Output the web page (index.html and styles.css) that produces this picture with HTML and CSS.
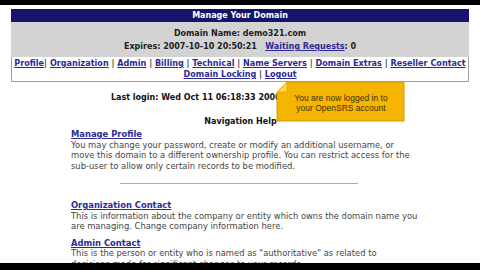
FILE: index.html
```html
<!DOCTYPE html>
<html lang="en">
<head>
    <meta charset="UTF-8">
    <title>Manage Your Domain</title>
    <link rel="stylesheet" href="styles.css">
</head>
<body>
    <div class="screen">
        <div class="bar"></div>
        <div class="page">
            <div class="domain">
                <div class="domain-title">Manage Your Domain</div>
                <div class="domain-info">
                    <p>Domain Name: demo321.com</p>
                    <p>Expires: 2007-10-10 20:50:21 &nbsp; <a href="#">Waiting Requests</a>: 0</p>
                </div>
                <div class="domain-nav">
                    <a href="#">Profile</a>| <a href="#">Organization</a> | <a href="#">Admin</a> | <a href="#">Billing</a> | <a href="#">Technical</a> | <a href="#">Name Servers</a> | <a href="#">Domain Extras</a> | <a href="#">Reseller Contact</a><br>
                    <a href="#">Domain Locking</a> | <a href="#">Logout</a>
                </div>
            </div>

            <div class="content">
                <p class="last-login">Last login: Wed Oct 11 06:18:33 2006</p>
                <h3>Navigation Help</h3>

                <div class="help">
                    <a href="#">Manage Profile</a>
                    <p>You may change your password, create or modify an additional username, or move this domain to a different ownership profile. You can restrict access for the sub-user to allow only certain records to be modified.</p>
                </div>

                <hr>

                <div class="help">
                    <a href="#">Organization Contact</a>
                    <p>This is information about the company or entity which owns the domain name you are managing. Change company information here.</p>
                </div>

                <div class="help">
                    <a href="#">Admin Contact</a>
                    <p>This is the person or entity who is named as "authoritative" as related to decisions made for significant changes to your records.</p>
                </div>
            </div>

            <div class="callout">
                <svg class="callout-bg" width="130" height="41" viewBox="0 0 130 41">
                    <polygon points="11,0 128,0 128,39 1,39 1,10" fill="#f4b400" stroke="#d99a00" stroke-width="1"/>
                    <polygon points="1,10 11,0 11,10" fill="#fbd65a"/>
                    <polygon points="1,10 11,10 11,0" fill="none" stroke="#e0a800" stroke-width="0.6"/>
                </svg>
                <p>You are now logged in to<br>your OpenSRS account</p>
            </div>
        </div>
        <div class="bar bar-bottom"></div>
    </div>
</body>
</html>
```

FILE: styles.css
```css
* {
    padding: 0;
    margin: 0;
}

body {
    background-color: #000;
    font-family: "DejaVu Sans", Verdana, sans-serif;
}

.screen {
    width: 480px;
    height: 270px;
    overflow: hidden;
    display: flex;
    flex-direction: column;
}

.bar {
    height: 5px;
    background-color: #000;
    flex-shrink: 0;
}

.bar-bottom {
    height: 7px;
}

.page {
    flex: 1;
    background-color: #fff;
    position: relative;
    overflow: hidden;
    padding: 4px 11px 0 11px;
}

.domain {
    width: 458px;
}

.domain-title {
    background-color: #14146b;
    color: #fff;
    font-size: 8px;
    font-weight: bold;
    text-align: center;
    height: 13px;
    line-height: 13px;
}

.domain-info {
    background-color: #d3d3d3;
    height: 35px;
    padding-top: 5px;
    box-sizing: border-box;
    font-size: 8px;
    font-weight: bold;
    color: #222;
    text-align: center;
    line-height: 13px;
}

.domain-info a,
.domain-nav a,
.help a {
    color: #2b2b96;
}

.domain-nav {
    border: 1px solid #a0a0a0;
    border-top: 0;
    height: 25px;
    box-sizing: border-box;
    padding-top: 1px;
    font-size: 8.1px;
    font-weight: bold;
    color: #444;
    text-align: center;
    line-height: 11px;
    white-space: nowrap;
}

.content {
    width: 347px;
    margin: 0 0 0 60px;
    font-size: 8.4px;
    color: #444;
}

.last-login {
    font-size: 8px;
    font-weight: bold;
    color: #111;
    padding: 10px 0 0 40px;
    line-height: 11px;
}

.content h3 {
    font-size: 8px;
    color: #111;
    text-align: center;
    line-height: 11px;
    margin-top: 13px;
    padding-right: 8px;
}

.help {
    line-height: 10.5px;
}

.help a {
    font-weight: bold;
    display: inline-block;
    margin-top: 2px;
}

.content hr {
    width: 238px;
    margin: 12px 0 14px 49px;
    border: 0;
    border-top: 1px solid #aaa;
}

.help + .help {
    margin-top: 4px;
}

.callout {
    position: absolute;
    left: 276px;
    top: 77px;
    width: 130px;
    height: 41px;
}

.callout-bg {
    position: absolute;
    left: 0;
    top: 0;
}

.callout p {
    position: relative;
    font-family: "Liberation Sans", Arial, sans-serif;
    font-size: 8.5px;
    color: #3a3000;
    text-align: center;
    line-height: 10px;
    padding-top: 11px;
}
```
